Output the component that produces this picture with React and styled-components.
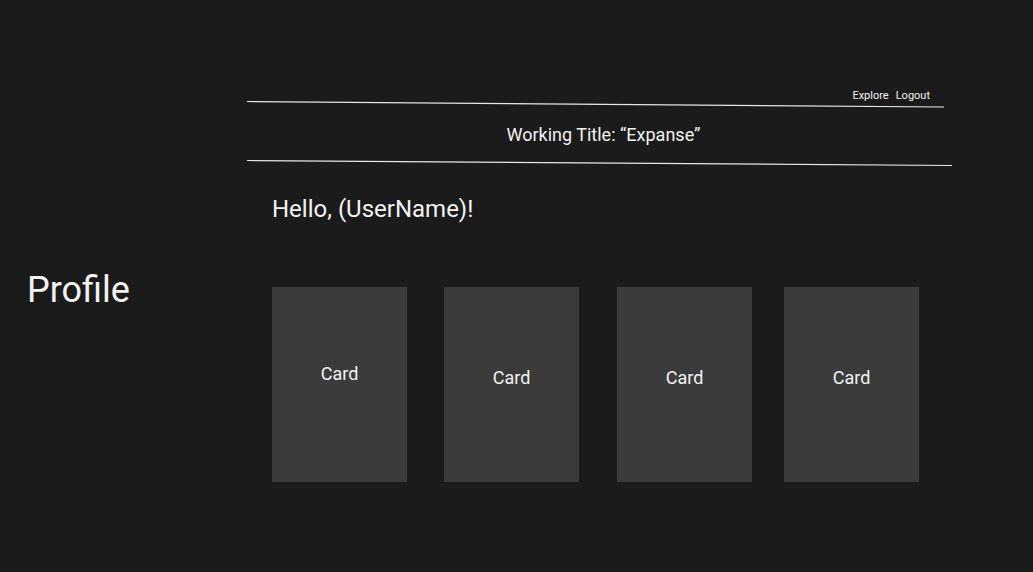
import React from 'react'
import styled, { createGlobalStyle } from 'styled-components'

const cards = [
  { gap: 0, top: 76 },
  { gap: 37, top: 80 },
  { gap: 38, top: 80 },
  { gap: 32, top: 80 },
]

function Rule({ width, drop }) {
  return (
    <RuleSvg width={width} height='8' viewBox={`0 0 ${width} 8`}>
      <line x1='0' y1='1.5' x2={width} y2={1.5 + drop} stroke='#e6e6e6' strokeWidth='1.2' />
    </RuleSvg>
  )
}

function App() {
  return (
    <>
      <GlobalStyle />
      <Page>
        <Sidebar>
          <PageName>Profile</PageName>
        </Sidebar>
        <Main>
          <NavLinks>
            <NavLink href='#'>Explore</NavLink>
            <NavLink href='#'>Logout</NavLink>
          </NavLinks>
          <Rule width={697} drop={5.5} />
          <Title>Working Title: “Expanse”</Title>
          <SecondRule>
            <Rule width={705} drop={5} />
          </SecondRule>
          <Content>
            <Greeting>Hello, (UserName)!</Greeting>
            <CardRow>
              {cards.map((c, i) => (
                <Card key={i} $gap={c.gap} $top={c.top}>Card</Card>
              ))}
            </CardRow>
          </Content>
        </Main>
      </Page>
    </>
  )
}

export default App

const GlobalStyle = createGlobalStyle`
  html, body {
    margin: 0;
    padding: 0;
    background: #1b1b1b;
    font-family: Roboto, "Noto Sans", sans-serif;
    color: #f2f2f2;
  }
`

const Page = styled.div`
  display: flex;
  min-height: 100vh;
  background: #1b1b1b;
`

const Sidebar = styled.aside`
  width: 247px;
  flex-shrink: 0;
  padding: 269px 0 0 27px;
  box-sizing: border-box;
`

const PageName = styled.h1`
  margin: 0;
  font-size: 36px;
  font-weight: 400;
  line-height: 42px;
`

const Main = styled.main`
  width: 705px;
  padding-top: 88px;
  display: flex;
  flex-direction: column;
`

const NavLinks = styled.nav`
  display: flex;
  justify-content: flex-end;
  gap: 7px;
  width: 697px;
  padding: 2px 14px 0 0;
  box-sizing: border-box;
  height: 12px;
  line-height: 12px;
  font-size: 11px;
`

const NavLink = styled.a`
  color: #f2f2f2;
  text-decoration: none;
`

const RuleSvg = styled.svg`
  display: block;
`

const Title = styled.div`
  margin-top: 16px;
  text-align: center;
  font-size: 18px;
  line-height: 21px;
  padding-left: 8px;
`

const SecondRule = styled.div`
  margin-top: 14px;
`

const Content = styled.section`
  padding-left: 25px;
`

const Greeting = styled.h2`
  margin: 28px 0 0;
  font-size: 24px;
  font-weight: 400;
  line-height: 28px;
`

const CardRow = styled.div`
  display: flex;
  margin-top: 64px;
`

const Card = styled.div`
  width: 135px;
  height: 195px;
  margin-left: ${p => p.$gap}px;
  padding-top: ${p => p.$top}px;
  box-sizing: border-box;
  background: #3b3b3b;
  text-align: center;
  font-size: 18px;
  line-height: 21px;
`
